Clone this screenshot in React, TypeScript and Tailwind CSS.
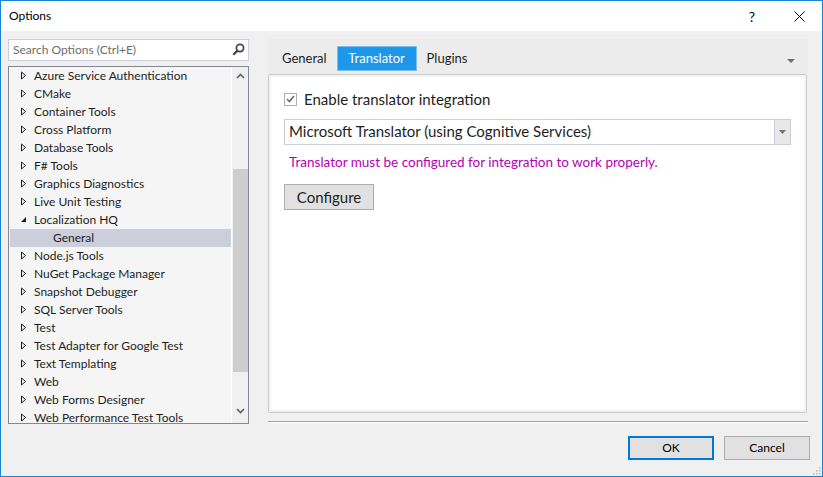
import React from 'react';

const font = { fontFamily: 'Lato, "Noto Sans", sans-serif' };

const treeItems: { label: string; expanded?: boolean; child?: boolean; selected?: boolean }[] = [
  { label: 'Azure Service Authentication' },
  { label: 'CMake' },
  { label: 'Container Tools' },
  { label: 'Cross Platform' },
  { label: 'Database Tools' },
  { label: 'F# Tools' },
  { label: 'Graphics Diagnostics' },
  { label: 'Live Unit Testing' },
  { label: 'Localization HQ', expanded: true },
  { label: 'General', child: true, selected: true },
  { label: 'Node.js Tools' },
  { label: 'NuGet Package Manager' },
  { label: 'Snapshot Debugger' },
  { label: 'SQL Server Tools' },
  { label: 'Test' },
  { label: 'Test Adapter for Google Test' },
  { label: 'Text Templating' },
  { label: 'Web' },
  { label: 'Web Forms Designer' },
  { label: 'Web Performance Test Tools' },
];

const Arrow: React.FC<{ expanded?: boolean }> = ({ expanded }) =>
  expanded ? (
    <svg width="7" height="7" viewBox="0 0 7 7" className="shrink-0">
      <path d="M6 1 L6 6 L1 6 Z" fill="#1e1e1e" />
    </svg>
  ) : (
    <svg width="7" height="9" viewBox="0 0 7 9" className="shrink-0">
      <path d="M1.5 1 L5.5 4.5 L1.5 8 Z" fill="none" stroke="#1e1e1e" strokeWidth="1" />
    </svg>
  );

const TreeRow: React.FC<{ item: (typeof treeItems)[number] }> = ({ item }) => (
  <div
    className={`h-[18px] flex items-center text-[12px] text-[#1e1e1e] whitespace-nowrap ${
      item.selected ? 'bg-[#cccedb]' : ''
    }`}
  >
    {item.child ? (
      <span className="pl-[43px]">{item.label}</span>
    ) : (
      <>
        <span className="w-[24px] flex justify-center pl-[3px]">
          <Arrow expanded={item.expanded} />
        </span>
        <span>{item.label}</span>
      </>
    )}
  </div>
);

const Chevron: React.FC<{ up?: boolean }> = ({ up }) => (
  <svg width="9" height="6" viewBox="0 0 9 6">
    <path d={up ? 'M1 5 L4.5 1.5 L8 5' : 'M1 1 L4.5 4.5 L8 1'} fill="none" stroke="#606060" strokeWidth="1.6" />
  </svg>
);

const App: React.FC = () => {
  return (
    <div className="w-[823px] h-[477px] border border-[#1883d7] bg-[#f0f0f0] flex flex-col overflow-hidden relative" style={font}>
      {/* title bar */}
      <div className="h-[30px] bg-white flex items-center pl-2 shrink-0">
        <span className="text-[12px] text-black">Options</span>
        <span className="ml-auto text-[14px] text-black mr-[39px]">?</span>
        <svg width="11" height="11" viewBox="0 0 11 11" className="mr-[17px]">
          <path d="M0.5 0.5 L10.5 10.5 M10.5 0.5 L0.5 10.5" stroke="#000" strokeWidth="1" />
        </svg>
      </div>

      {/* main */}
      <div className="flex pt-2 pl-[7px] h-[393px] shrink-0">
        {/* left */}
        <div className="w-[241px] flex flex-col gap-[5px]">
          <div className="h-[22px] bg-white border border-[#cccedb] flex items-center pl-[4px] pr-[3px]">
            <span className="text-[12px] text-[#6d6d6d]">Search Options (Ctrl+E)</span>
            <svg width="13" height="13" viewBox="0 0 13 13" className="ml-auto">
              <circle cx="8" cy="5" r="3.6" fill="none" stroke="#424242" strokeWidth="1.7" />
              <path d="M5.4 7.6 L1.3 11.7" stroke="#424242" strokeWidth="2.2" />
            </svg>
          </div>
          <div className="h-[359px] border border-[#828790] bg-[#f5f5f5] flex overflow-hidden">
            <div className="flex-1 pl-px overflow-hidden">
              {treeItems.map((it) => (
                <TreeRow key={it.label} item={it} />
              ))}
            </div>
            <div className="w-[17px] border-l border-white bg-[#f0f0f0] flex flex-col items-center">
              <div className="h-[17px] flex items-center justify-center mt-[1px]">
                <Chevron up />
              </div>
              <div className="mt-[84px] w-[15px] h-[203px] bg-[#cdcdcd]" />
              <div className="mt-auto h-[17px] flex items-center justify-center mb-[4px]">
                <Chevron />
              </div>
            </div>
          </div>
        </div>

        {/* right */}
        <div className="ml-[19px] w-[540px] flex flex-col">
          <div className="h-[35px] bg-[#ececec] flex items-end pb-[3px] pl-[6px] relative">
            <div className="h-[25px] pl-[8px] pr-[10px] flex items-center text-[13px] text-[#1e1e1e]">General</div>
            <div className="h-[25px] w-[80px] bg-[#1c97ea] border border-[#7fbdeb] flex items-center justify-center text-[13px] text-white">
              Translator
            </div>
            <div className="h-[25px] px-[10px] flex items-center text-[13px] text-[#1e1e1e]">Plugins</div>
            <svg width="8" height="5" viewBox="0 0 8 5" className="absolute right-[13px] top-[20px]">
              <path d="M0 0 L8 0 L4 4 Z" fill="#717171" />
            </svg>
          </div>
          <div className="h-[339px] w-[539px] border border-[#cccccc] rounded-[2px] bg-[#f3f3f3] p-[2px]">
            <div className="h-full bg-white pl-[13px] pt-[11px] pr-[14px]">
              <div className="flex items-center gap-[7px]">
                <div className="w-[13px] h-[13px] border border-[#adadad] bg-white flex items-center justify-center">
                  <svg width="9" height="8" viewBox="0 0 9 8">
                    <path d="M1 4 L3.5 6.5 L8 1" fill="none" stroke="#6a6a6a" strokeWidth="1.6" />
                  </svg>
                </div>
                <span className="text-[15px] text-[#1e1e1e]">Enable translator integration</span>
              </div>
              <div className="mt-[8px] h-[26px] w-[507px] border border-[#cccedb] flex items-center">
                <span className="pl-[4px] text-[15px] text-[#1e1e1e]">Microsoft Translator (using Cognitive Services)</span>
                <div className="ml-auto w-[16px] h-full bg-[#e8e8e8] border-l border-[#cccedb] flex items-center justify-center">
                  <svg width="7" height="4" viewBox="0 0 7 4">
                    <path d="M0 0 L7 0 L3.5 4 Z" fill="#717171" />
                  </svg>
                </div>
              </div>
              <div className="mt-[7px] pl-[5px] text-[13.5px] text-[#b300b3]">
                Translator must be configured for integration to work properly.
              </div>
              <div className="mt-[12px] w-[90px] h-[26px] bg-[#e1e1e1] border border-[#adadad] flex items-center justify-center text-[15px] text-[#1e1e1e]">
                Configure
              </div>
            </div>
          </div>
          <div className="mt-[8px] h-[2px] border-t border-[#a0a0a0] border-b border-b-white" />
        </div>
      </div>

      {/* buttons */}
      <div className="flex justify-end gap-[10px] pr-[12px] mt-[12px]">
        <div className="w-[86px] h-[24px] border-2 border-[#0078d7] bg-[#e1e1e1] flex items-center justify-center text-[12px] text-black">
          OK
        </div>
        <div className="w-[86px] h-[24px] border border-[#adadad] bg-[#e1e1e1] flex items-center justify-center text-[12px] text-black">
          Cancel
        </div>
      </div>
      <svg width="10" height="10" viewBox="0 0 10 10" className="absolute right-[1px] bottom-[1px]">
        {[
          [8, 2],
          [8, 5],
          [8, 8],
          [5, 5],
          [5, 8],
          [2, 8],
        ].map(([x, y]) => (
          <rect key={`${x}-${y}`} x={x} y={y} width="1.5" height="1.5" fill="#b8b8b8" />
        ))}
      </svg>
    </div>
  );
};

export default App;
